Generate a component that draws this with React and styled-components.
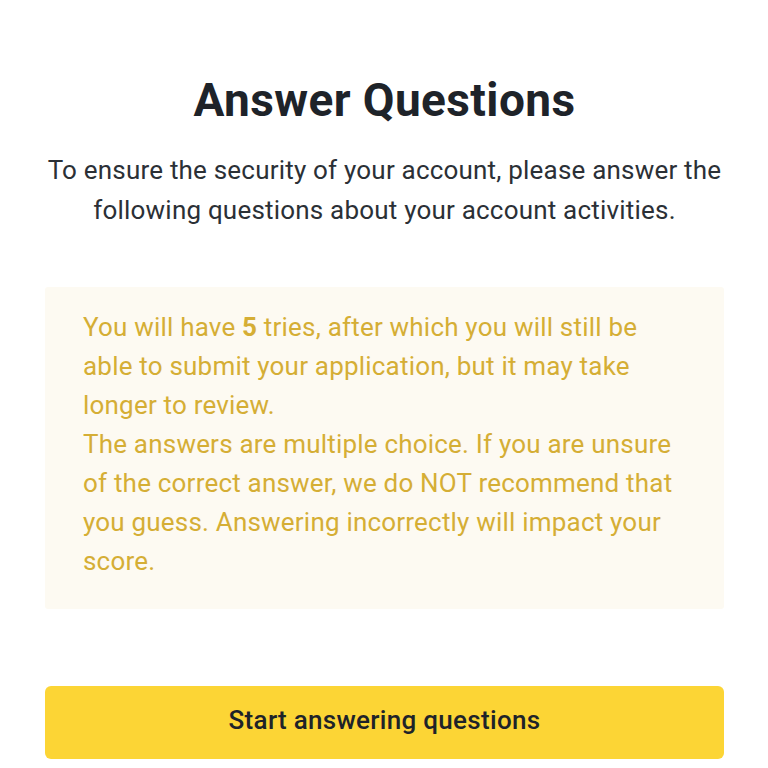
import styled, { createGlobalStyle } from "styled-components";

const GlobalStyle = createGlobalStyle`
  html, body {
    margin: 0;
    background: #ffffff;
  }

  body {
    font-family: Roboto, "Noto Sans", "Liberation Sans", sans-serif;
    color: #1e2329;
  }
`;

const Page = styled.div`
  width: 768px;
  min-height: 768px;
  padding: 74px 44px 0 45px;
  box-sizing: border-box;
  display: flex;
  flex-direction: column;
`;

const Title = styled.h1`
  margin: 0;
  font-size: 46px;
  line-height: 52px;
  font-weight: 700;
  letter-spacing: 0.4px;
  text-align: center;
  color: #1e2329;
`;

const Subtitle = styled.p`
  margin: 24px 0 0;
  font-size: 26px;
  line-height: 40px;
  letter-spacing: 0.2px;
  text-align: center;
  color: #2b3036;
`;

const Notice = styled.div`
  margin-top: 57px;
  padding: 21px 38px 28px;
  background: #fdfaf2;
  border-radius: 3px;
  font-size: 26px;
  line-height: 39px;
  letter-spacing: 0.2px;
  color: #d5ae35;

  b {
    font-weight: 700;
  }
`;

const StartButton = styled.button`
  margin-top: 77px;
  height: 73px;
  padding: 0 0 5px;
  border: none;
  border-radius: 6px;
  background: #fcd535;
  color: #1e2329;
  font-family: inherit;
  font-size: 26px;
  font-weight: 500;
  letter-spacing: 0.3px;
  cursor: pointer;
`;

export default function App() {
  return (
    <>
      <GlobalStyle />
      <Page>
        <Title>Answer Questions</Title>
        <Subtitle>
          To ensure the security of your account, please answer the following
          questions about your account activities.
        </Subtitle>
        <Notice>
          You will have <b>5</b> tries, after which you will still be able to
          submit your application, but it may take longer to review.
          <br />
          The answers are multiple choice. If you are unsure of the correct
          answer, we do NOT recommend that you guess. Answering incorrectly will
          impact your score.
        </Notice>
        <StartButton>Start answering questions</StartButton>
      </Page>
    </>
  );
}
